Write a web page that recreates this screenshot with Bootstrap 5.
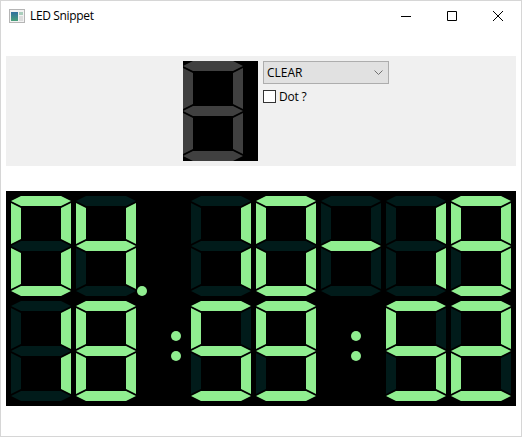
<!DOCTYPE html>
<html lang="en">
  <head>
    <meta charset="UTF-8" />
    <meta name="viewport" content="width=device-width, initial-scale=1.0" />
    <title>LED Snippet</title>
    <link rel="stylesheet" href="https://cdn.jsdelivr.net/npm/bootstrap@5.3.2/dist/css/bootstrap.min.css" />
    <style>
      body { font-family: "Open Sans", "Noto Sans", sans-serif; font-size: 12px; color: #000; overflow: hidden; }
      .win-frame { height: 437px; border: 1px solid #d6d6d6; }
      .win-title { height: 30px; padding-left: 8px; font-size: 12px; letter-spacing: -0.35px; }
      .win-name { margin-left: 5px; }
      .win-btn { width: 46px; height: 30px; margin-top: -1px; }
      .win-body { padding: 25px 5px 0; }
      .picker-panel { background: #f0f0f0; height: 110px; padding: 5px 0 0 177px; gap: 5px; }
      .led-box { width: 75px; height: 100px; background: #000; }
      .led-box svg, .led-row svg { display: block; overflow: visible; }
      .picker-side { width: 126px; }
      .led-select {
        height: 23px; padding: 0 20px 0 3px; border: 1px solid #adadad; border-radius: 0;
        background-color: #e1e1e1; color: #000; font-size: 12px;
        background-position: right 5px center; background-size: 9px 5px;
        background-image: url("data:image/svg+xml,%3csvg xmlns='http://www.w3.org/2000/svg' viewBox='0 0 9 5'%3e%3cpath fill='none' stroke='%23707070' d='M.5.5 4.5 4.5 8.5.5'/%3e%3c/svg%3e");
      }
      .dot-check { min-height: 0; padding: 0; margin: 6px 0 0; letter-spacing: -0.2px; }
      .dot-check .form-check-input {
        float: none; width: 13px; height: 13px; margin: 0 3px 0 0; border: 1px solid #333; border-radius: 0;
      }
      .dot-check .form-check-label { line-height: 13px; }
      .led-panel { background: #000; height: 215px; margin-top: 25px; padding: 5px; gap: 5px; }
      .led-row { gap: 5px; }
      .led-gap { width: 45px; }
      .seg-on { fill: #90ee90; }
      .seg-off { fill: #011b1a; }
      .seg-idle { fill: #404040; }
    </style>
  </head>
  <body>
    <div class="win-frame d-flex flex-column">
      <header class="win-title d-flex align-items-center">
        <svg width="16" height="14" viewBox="0 0 16 14" class="flex-shrink-0">
          <defs>
            <linearGradient id="ico" x1="0" y1="0" x2="0" y2="1">
              <stop offset="0" stop-color="#2f6f9f" />
              <stop offset="1" stop-color="#4aa07a" />
            </linearGradient>
          </defs>
          <rect x="0.5" y="0.5" width="15" height="13" fill="#f2f2f2" stroke="#b5b5b5" />
          <rect x="2" y="3" width="7" height="9" fill="url(#ico)" />
          <rect x="10" y="3" width="4" height="3" fill="#a9cdbb" />
          <rect x="10" y="7" width="4" height="5" fill="#dcdcdc" />
        </svg>
        <span class="win-name">LED Snippet</span>
        <div class="ms-auto d-flex">
          <div class="win-btn d-flex align-items-center justify-content-center">
            <svg width="10" height="10" viewBox="0 0 10 10"><path d="M0 5.5h10" stroke="#000" fill="none" /></svg>
          </div>
          <div class="win-btn d-flex align-items-center justify-content-center">
            <svg width="10" height="10" viewBox="0 0 10 10"><path d="M.5.5h9v9h-9z" stroke="#000" fill="none" /></svg>
          </div>
          <div class="win-btn d-flex align-items-center justify-content-center">
            <svg width="10" height="10" viewBox="0 0 10 10"><path d="M0 0l10 10M10 0L0 10" stroke="#000" fill="none" /></svg>
          </div>
        </div>
      </header>
      <main class="win-body">
        <section class="picker-panel d-flex">
          <div id="preview" class="led-box"></div>
          <div class="picker-side">
            <select class="form-select led-select"><option>CLEAR</option></select>
            <div class="form-check dot-check d-flex align-items-center">
              <input class="form-check-input" type="checkbox" id="dot" />
              <label class="form-check-label" for="dot">Dot ?</label>
            </div>
          </div>
        </section>
        <section class="led-panel d-flex flex-column">
          <div id="row1" class="led-row d-flex"></div>
          <div id="row2" class="led-row d-flex"></div>
        </section>
      </main>
    </div>

    <script>
      const SEGMENTS = {
        a: "0,5 10,0 50,0 60,5 50,10 10,10",
        f: "0,7 10,12 10,43 0,48",
        b: "60,7 50,12 50,43 60,48",
        g: "0,50 10,45 50,45 60,50 50,55 10,55",
        e: "0,52 10,57 10,88 0,93",
        c: "60,52 50,57 50,88 60,93",
        d: "0,95 10,90 50,90 60,95 50,100 10,100",
      };
      const GLYPHS = { 0: "abcdef", 1: "bc", 2: "abdeg", 4: "bcfg", 5: "acdfg", 8: "abcdefg", 9: "abcdfg", "-": "g", "": "" };

      function digit(ch, opts = {}) {
        let lit = GLYPHS[ch];
        let shapes = Object.keys(SEGMENTS).map((s) => {
          let cls = opts.idle ? "seg-idle" : lit.includes(s) ? "seg-on" : "seg-off";
          return `<polygon class="${cls}" points="${SEGMENTS[s]}" />`;
        });
        let dot = opts.dot ? `<circle class="seg-on" cx="66" cy="95" r="5" />` : "";
        return `<svg width="60" height="100" viewBox="0 0 60 100">${shapes.join("")}${dot}</svg>`;
      }

      function colon(width) {
        return `<svg width="${width}" height="100" viewBox="0 0 ${width} 100">
          <circle class="seg-on" cx="35" cy="35" r="5" /><circle class="seg-on" cx="35" cy="55" r="5" /></svg>`;
      }

      const spacer = `<div class="led-gap"></div>`;
      document.getElementById("preview").innerHTML = digit("", { idle: true });
      document.getElementById("row1").innerHTML =
        digit(0) + digit(4, { dot: true }) + spacer + digit(1) + digit(0) + digit("-") + digit(1) + digit(9);
      document.getElementById("row2").innerHTML =
        digit(1) + digit(8) + colon(45) + digit(5) + digit(9) + colon(60) + digit(5) + digit(2);
    </script>
    <script src="https://cdn.jsdelivr.net/npm/bootstrap@5.3.2/dist/js/bootstrap.bundle.min.js"></script>
  </body>
</html>
